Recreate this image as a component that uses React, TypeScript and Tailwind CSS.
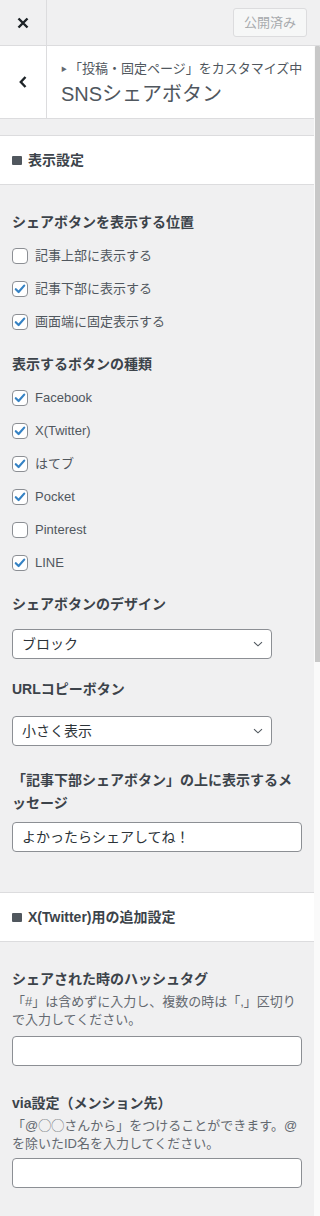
import type { ReactNode } from 'react';

const font = { fontFamily: '"Liberation Sans", "Noto Sans CJK JP", sans-serif' };

const Check = ({ checked }: { checked?: boolean }) => (
    <span className="flex h-4 w-4 shrink-0 items-center justify-center rounded-[4px] border border-[#8c8f94] bg-white">
        {checked && (
            <svg width="14" height="14" viewBox="0 0 14 14">
                <path d="M2.8 7.2 L5.6 10 L11.2 3.6" fill="none" stroke="#3582c4" strokeWidth="2.2" strokeLinecap="round" strokeLinejoin="round" />
            </svg>
        )}
    </span>
);

const CheckRow = ({ label, checked }: { label: string; checked?: boolean }) => (
    <div className="flex h-[33px] items-center gap-[7px]">
        <Check checked={checked} />
        <span className="text-[13px] text-[#50575e]">{label}</span>
    </div>
);

const Label = ({ children, className = '' }: { children: ReactNode; className?: string }) => (
    <div className={`text-[14px] font-bold leading-5 text-[#3c434a] ${className}`}>{children}</div>
);

const Select = ({ value, className = '' }: { value: string; className?: string }) => (
    <div className={`flex h-[30px] w-[260px] items-center justify-between rounded-[4px] border border-[#8c8f94] bg-white pl-[9px] pr-[7px] ${className}`}>
        <span className="text-[14px] text-[#2c3338]">{value}</span>
        <svg width="12" height="8" viewBox="0 0 12 8">
            <path d="M2 2.2 L6 5.8 L10 2.2" fill="none" stroke="#50575e" strokeWidth="1.1" />
        </svg>
    </div>
);

const Input = ({ value = '', className = '' }: { value?: string; className?: string }) => (
    <div className={`flex h-[30px] w-[290px] items-center rounded-[4px] border border-[#8c8f94] bg-white px-[9px] ${className}`}>
        <span className="text-[14px] text-[#2c3338]">{value}</span>
    </div>
);

const SectionHead = ({ title }: { title: string }) => (
    <div className="flex h-[50px] items-center gap-[6px] border-y border-[#dcdcde] bg-white px-3">
        <span className="h-[9px] w-[10px] rounded-[1px] bg-[#50575e]" />
        <span className="text-[14px] font-bold text-[#3c434a]">{title}</span>
    </div>
);

const Desc = ({ children, className = '' }: { children: ReactNode; className?: string }) => (
    <div className={`whitespace-nowrap text-[13px] leading-[18px] text-[#646970] ${className}`}>{children}</div>
);

export default function App() {
    return (
        <div className="flex h-[1216px] w-[320px] flex-col overflow-hidden bg-[#f0f0f1]" style={font}>
            {/* top bar */}
            <div className="flex h-[46px] shrink-0 items-center border-b border-[#dcdcde]">
                <div className="flex h-full w-[47px] items-center justify-center border-r border-[#dcdcde]">
                    <svg width="12" height="12" viewBox="0 0 12 12">
                        <path d="M1.5 1.5 L10.5 10.5 M10.5 1.5 L1.5 10.5" stroke="#1d2327" strokeWidth="2.4" />
                    </svg>
                </div>
                <div className="flex flex-1 justify-end pr-[13px]">
                    <div className="flex h-[29px] w-[74px] items-center justify-center rounded-[3px] border border-[#dcdcde] bg-[#f6f7f7] text-[13px] text-[#a7aaad]">
                        公開済み
                    </div>
                </div>
            </div>

            <div className="flex flex-1">
                {/* panel */}
                <div className="w-[314px] shrink-0">
                    <div className="flex h-[73px] border-b border-[#dcdcde] bg-white">
                        <div className="flex w-[47px] items-center justify-center border-r border-[#dcdcde]">
                            <svg width="10" height="14" viewBox="0 0 10 14">
                                <path d="M7.5 2 L2.8 7 L7.5 12" fill="none" stroke="#1d2327" strokeWidth="2.4" />
                            </svg>
                        </div>
                        <div className="flex flex-col justify-center pl-[14px] pt-[2px] text-[#50575e]">
                            <div className="flex items-center text-[13px] leading-[18px]">
                                <span className="mr-[2px] text-[6px] text-[#646970]">▶</span>
                                「投稿・固定ページ」をカスタマイズ中
                            </div>
                            <div className="mt-[3px] text-[20px] leading-[26px]">SNSシェアボタン</div>
                        </div>
                    </div>

                    <div className="h-4" />
                    <SectionHead title="表示設定" />

                    <div className="px-3 pt-[27px]">
                        <Label>シェアボタンを表示する位置</Label>
                        <div className="mt-[7px]">
                            <CheckRow label="記事上部に表示する" />
                            <CheckRow label="記事下部に表示する" checked />
                            <CheckRow label="画面端に固定表示する" checked />
                        </div>

                        <Label className="mt-[16px]">表示するボタンの種類</Label>
                        <div className="mt-[7px]">
                            <CheckRow label="Facebook" checked />
                            <CheckRow label="X(Twitter)" checked />
                            <CheckRow label="はてブ" checked />
                            <CheckRow label="Pocket" checked />
                            <CheckRow label="Pinterest" />
                            <CheckRow label="LINE" checked />
                        </div>

                        <Label className="mt-[15px]">シェアボタンのデザイン</Label>
                        <Select value="ブロック" className="mt-[15px]" />

                        <Label className="mt-[20px]">URLコピーボタン</Label>
                        <Select value="小さく表示" className="mt-[17px]" />

                        <div className="mt-[23px] text-[14px] font-bold leading-[23px] text-[#3c434a]">
                            「記事下部シェアボタン」の上に表示するメ
                            <br />
                            ッセージ
                        </div>
                        <Input value="よかったらシェアしてね！" className="mt-[7px]" />
                    </div>

                    <div className="h-10" />
                    <SectionHead title="X(Twitter)用の追加設定" />

                    <div className="px-3 pt-[27px]">
                        <Label>シェアされた時のハッシュタグ</Label>
                        <Desc className="mt-[4px]">
                            「#」は含めずに入力し、複数の時は「,」区切り
                            <br />
                            で入力してください。
                        </Desc>
                        <Input className="mt-[7px]" />

                        <Label className="mt-[27px]">via設定（メンション先）</Label>
                        <Desc className="mt-[4px]">
                            「@◯◯さんから」をつけることができます。@
                            <br />
                            を除いたID名を入力してください。
                        </Desc>
                        <Input className="mt-[5px]" />
                    </div>
                </div>

                {/* scrollbar */}
                <div className="flex-1 bg-[#fafafa] pl-px">
                    <div className="h-[616px] rounded-t-[1px] bg-[#c8c8c8]" />
                </div>
            </div>
        </div>
    );
}
